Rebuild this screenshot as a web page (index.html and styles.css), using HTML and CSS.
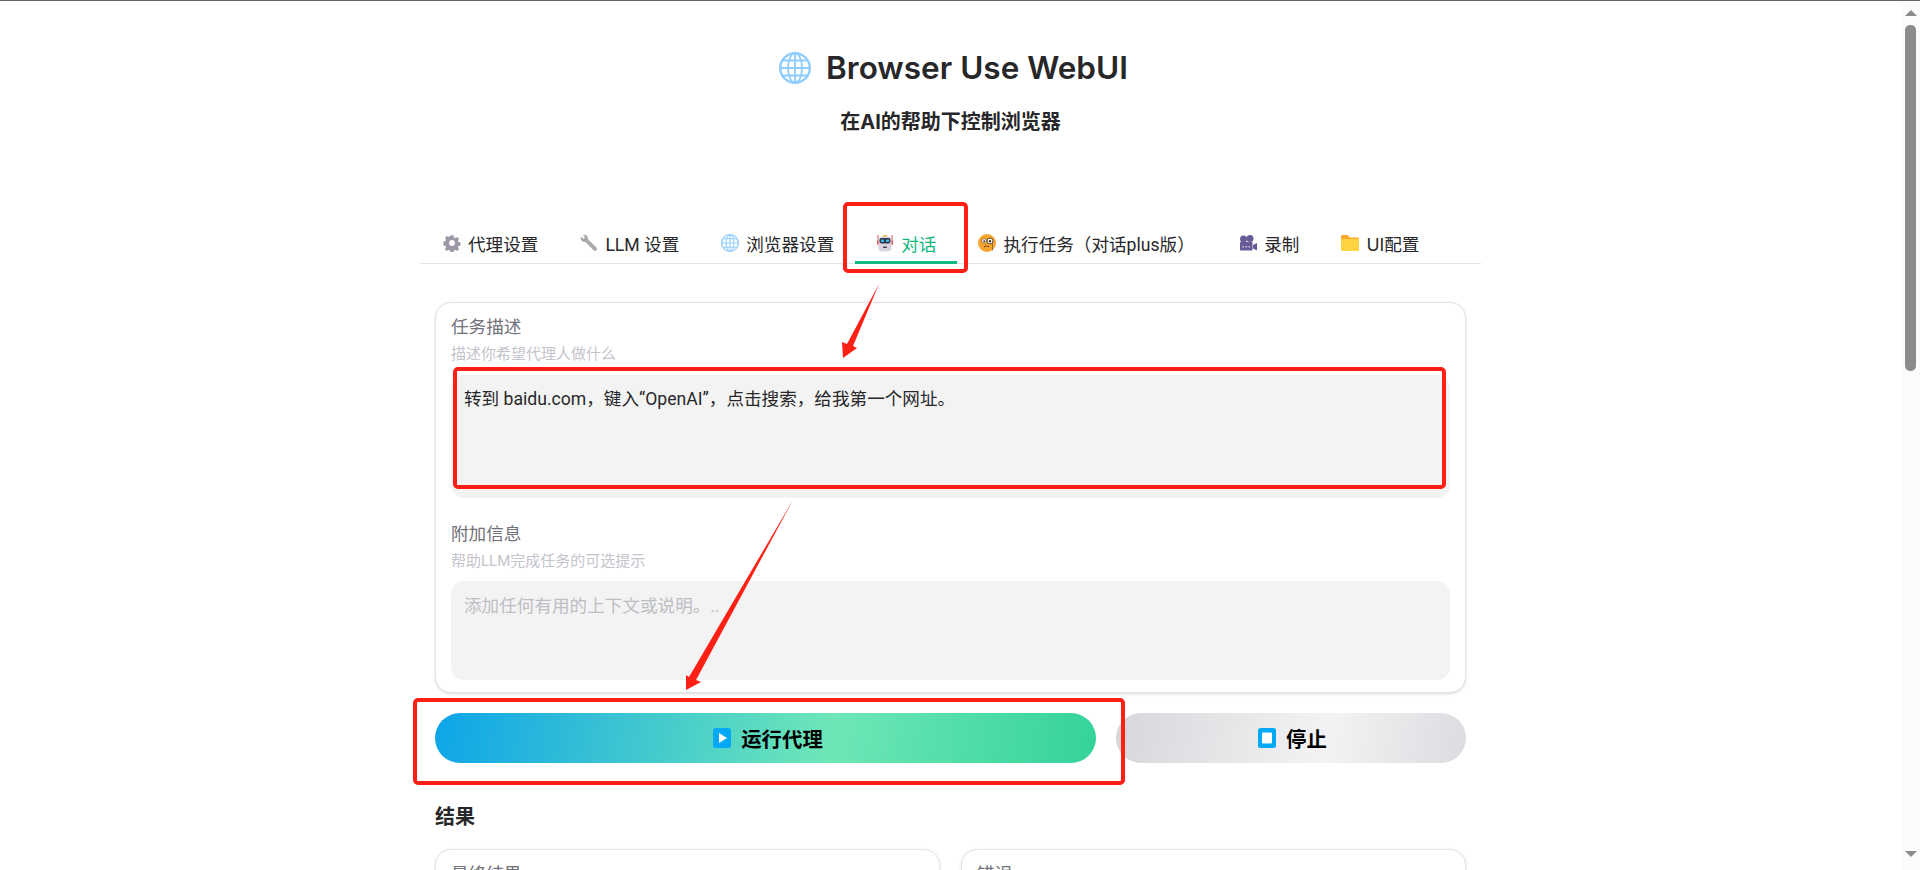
FILE: index.html
```html
<!DOCTYPE html>
<html lang="zh-CN">
<head>
<meta charset="utf-8">
<title>Browser Use WebUI</title>
<link rel="stylesheet" href="styles.css">
</head>
<body>
<svg class="defs" width="0" height="0" aria-hidden="true">
  <symbol id="globe" viewBox="0 0 32 32">
    <g fill="none" stroke="#90cdff" stroke-width="1.8">
      <circle cx="16" cy="16" r="14.800" stroke-width="2.400"/>
      <ellipse cx="16" cy="16" rx="7" ry="14.800"/>
      <path d="M16 1.400V30.600M1.400 16H30.600M4 8.500H28M4 23.500H28"/>
    </g>
  </symbol>
</svg>
<div class="app">
  <main class="page">
    <div class="container">
      <header class="head">
        <h1 class="title"><svg class="title-icon"><use href="#globe"/></svg><span>Browser Use WebUI</span></h1>
        <h3 class="subtitle">在AI的帮助下控制浏览器</h3>
      </header>
      <nav class="tabs">
        <div class="tab">
          <svg class="ico" viewBox="0 0 18 18"><path fill="#9d97a8" fill-rule="evenodd" d="M7.400 0.500h3.200l.5 2.300 1.500.7 2-1.200 2.200 2.200-1.200 2 .6 1.500 2.300.5v3.200l-2.300.5-.6 1.500 1.200 2-2.200 2.200-2-1.200-1.500.6-.5 2.300H7.400l-.5-2.300-1.500-.6-2 1.200-2.200-2.200 1.200-2-.6-1.500-2.300-.5V7.300l2.300-.5.6-1.500-1.200-2 2.200-2.200 2 1.200 1.500-.7zM9 5.800a3.200 3.200 0 1 0 0 6.400 3.200 3.200 0 0 0 0-6.400z" transform="translate(.9 .9) scale(.9)"/></svg>
          <span>代理设置</span>
        </div>
        <div class="tab">
          <svg class="ico" viewBox="0 0 18 18"><path fill="#a9a9ae" d="M1.200 2.500 3.300 4.700 5 3.200 3 1C5 .2 7 1 7.700 2.800c.3.800.3 1.500.1 2.200l8.400 8.300c1 .9 1 2.200.2 3-.8.800-2.100.8-3-.2L5.100 7.700c-.8.300-1.700.2-2.500-.1C.9 6.800.3 4.500 1.200 2.500z"/></svg>
          <span>LLM 设置</span>
        </div>
        <div class="tab">
          <svg class="ico"><use href="#globe"/></svg>
          <span>浏览器设置</span>
        </div>
        <div class="tab active">
          <svg class="ico" viewBox="0 0 18 18">
            <path fill="#e2575a" d="M1.500 1h1v5h-1zM15.500 1h1v5h-1z"/>
            <rect x="6.500" y="1" width="5" height="2" rx="1" fill="#f5c04a"/>
            <rect x="1" y="6" width="2" height="5" rx="1" fill="#e2575a"/>
            <rect x="15" y="6" width="2" height="5" rx="1" fill="#e2575a"/>
            <rect x="2.500" y="2.500" width="13" height="15" rx="4" fill="#d8d3de"/>
            <rect x="3.500" y="4" width="11" height="5.500" rx="2" fill="#2f3b4d"/>
            <rect x="5" y="5.500" width="3" height="2.500" rx="1" fill="#3dc2f0"/>
            <rect x="10" y="5.500" width="3" height="2.500" rx="1" fill="#3dc2f0"/>
            <rect x="7" y="12.500" width="4" height="1.500" fill="#4a4a55"/>
          </svg>
          <span>对话</span>
        </div>
        <div class="tab tab-wide">
          <svg class="ico" viewBox="0 0 18 18">
            <circle cx="9" cy="9" r="9" fill="#f8a52e"/>
            <circle cx="6" cy="7" r="2.400" fill="#fff" stroke="#8a5a20" stroke-width=".8"/>
            <circle cx="12" cy="7" r="3" fill="#fff" stroke="#5d4a3a" stroke-width="1"/>
            <circle cx="6.200" cy="7.200" r="1" fill="#4a3420"/>
            <circle cx="12" cy="7.200" r="1.200" fill="#4a3420"/>
            <path d="M6 13c1.500-1.200 3.500-1.200 5 0" fill="none" stroke="#7a4a1a" stroke-width="1.200"/>
            <path d="M14.500 9.500v7" stroke="#7a5a3a" stroke-width=".8"/>
          </svg>
          <span>执行任务（对话plus版）</span>
        </div>
        <div class="tab">
          <svg class="ico" viewBox="0 0 18 18">
            <g fill="#675a96">
              <circle cx="4.500" cy="5" r="3.500"/>
              <circle cx="11" cy="4.500" r="3.500"/>
              <rect x="1" y="8" width="12.500" height="8.500" rx="1"/>
              <path d="M14 11l4-2v7.500l-4-2z"/>
            </g>
            <path d="M3.500 12h1.500v1.500H3.500zM6.500 12H8v1.500H6.500zM9.500 12H11v1.500H9.500z" fill="#c9c3de"/>
          </svg>
          <span>录制</span>
        </div>
        <div class="tab tab-ui">
          <svg class="ico" viewBox="0 0 18 18">
            <path fill="#ffa729" d="M0 2.500C0 1.700.7 1 1.500 1h5L9 3.500h8c.5 0 1 .5 1 1V7H0z"/>
            <rect x="0" y="5" width="18" height="12" rx="1" fill="#ffd33f"/>
          </svg>
          <span>UI配置</span>
        </div>
      </nav>
      <section class="card form-card">
        <div class="field">
          <label class="label" for="task">任务描述</label>
          <p class="hint">描述你希望代理人做什么</p>
          <textarea class="input input-tall" id="task" readonly>转到 baidu.com，键入“OpenAI”，点击搜索，给我第一个网址。</textarea>
        </div>
        <div class="field">
          <label class="label" for="extra">附加信息</label>
          <p class="hint">帮助LLM完成任务的可选提示</p>
          <textarea class="input input-short" id="extra" readonly placeholder="添加任何有用的上下文或说明。.."></textarea>
        </div>
      </section>
      <div class="actions">
        <button class="btn btn-run">
          <svg class="btn-ico" viewBox="0 0 18 20"><rect width="18" height="20" rx="2.500" fill="#03a9f4"/><path d="M6 5l8 5-8 5z" fill="#fff"/></svg>
          运行代理
        </button>
        <button class="btn btn-stop">
          <svg class="btn-ico" viewBox="0 0 18 20"><rect width="18" height="20" rx="2.500" fill="#03a9f4"/><rect x="4" y="4.500" width="10" height="11" rx="1" fill="#fff"/></svg>
          停止
        </button>
      </div>
      <h2 class="section-title">结果</h2>
      <div class="results">
        <section class="card result-card"><div class="label">最终结果</div></section>
        <section class="card result-card"><div class="label">错误</div></section>
      </div>
    </div>
  </main>
  <aside class="scrollbar">
    <span class="arrow arrow-up"></span>
    <span class="thumb"></span>
    <span class="arrow arrow-down"></span>
  </aside>
  <svg class="marks" viewBox="0 0 1920 870" aria-hidden="true">
    <g fill="none" stroke="#fe2015" stroke-width="4">
      <rect x="845" y="204" width="121" height="67" rx="3"/>
      <rect x="455" y="369" width="989" height="118" rx="3"/>
      <rect x="415" y="700" width="708" height="83" rx="3"/>
    </g>
    <g fill="#fe2015">
      <polygon points="879,284 853,346 857,348 843,358 842,342 847,344"/>
      <polygon points="793,500 696,680 701,682 686,690 686,675 689,677"/>
    </g>
  </svg>
</div>
</body>
</html>
```

FILE: styles.css
```css
* { box-sizing: border-box; }

html, body {
  margin: 0;
  height: 100%;
  overflow: hidden;
}

body {
  background: #fff;
  color: #27272a;
  font-family: Roboto, "Noto Sans CJK SC", sans-serif;
}

.defs { position: absolute; }

.app {
  position: relative;
  display: flex;
  height: 870px;
  border-top: 1px solid #666;
  overflow: hidden;
}

.page {
  flex: 1;
  min-width: 0;
  overflow: hidden;
}

.container {
  width: 1061px;
  margin: 0 auto;
}

.head { padding-top: 47px; text-align: center; }

.title {
  display: flex;
  justify-content: center;
  align-items: center;
  gap: 15px;
  margin: 0;
  height: 40px;
  padding-left: 6px;
  font-family: Inter, "Noto Sans CJK SC", sans-serif;
  font-size: 31.500px;
  font-weight: 600;
  line-height: 40px;
}

.title-icon { width: 32px; height: 32px; }

.subtitle {
  margin: 20px 0 0;
  font-family: Inter, "Noto Sans CJK SC", sans-serif;
  font-size: 20px;
  font-weight: 700;
  line-height: 28px;
}

.tabs {
  display: flex;
  height: 40px;
  margin-top: 88px;
  padding-left: 2px;
  border-bottom: 1px solid #e4e4e7;
}

.tab {
  display: flex;
  align-items: center;
  gap: 7px;
  height: 40px;
  padding: 0 21px 2px;
  font-size: 17.600px;
  white-space: nowrap;
}

.tab.active {
  color: #10b981;
  border-bottom: 3px solid #10b981;
  padding-top: 1px;
  padding-bottom: 0;
}

.tab-wide { padding-right: 23.500px; }

.tab-ui span { font-family: Inter, "Noto Sans CJK SC", sans-serif; }

.ico { flex: none; width: 18px; height: 18px; }

.card {
  background: #fff;
  border: 1px solid #e4e4e7;
  border-radius: 16px;
  box-shadow: 0 1px 3px rgba(0, 0, 0, .14);
}

.form-card {
  display: flex;
  flex-direction: column;
  gap: 24px;
  margin: 38px 15px 0;
  padding: 12px 15px;
}

.label {
  display: block;
  color: #71717a;
  font-size: 17.600px;
  line-height: 24px;
}

.hint {
  margin: 5px 0 10px;
  color: #c4c4cc;
  font-size: 15px;
  line-height: 20px;
}

.input {
  display: block;
  width: 100%;
  padding: 12px 13px;
  border: 0;
  border-radius: 13px;
  outline: 0;
  resize: none;
  background: #f3f3f3;
  color: #27272a;
  font: inherit;
  font-size: 17.600px;
  line-height: 25px;
}

.input::placeholder { color: #bdbdc4; opacity: 1; }

.input-tall { height: 123px; margin-top: 11px; }
.input-short { height: 99px; padding-top: 13px; }

.actions {
  display: grid;
  grid-template-columns: 661fr 350fr;
  gap: 20px;
  margin: 20px 15px 0;
}

.btn {
  display: flex;
  justify-content: center;
  align-items: center;
  gap: 10px;
  height: 50px;
  border: 0;
  border-radius: 25px;
  color: #000;
  font: inherit;
  font-size: 20.400px;
  font-weight: 700;
}

.btn-run {
  padding-left: 11px;
  background: linear-gradient(100deg, #0ea5e9 0%, #6ee7b7 60%, #34d399 100%);
}

.btn-stop {
  padding-left: 9px;
  background: linear-gradient(100deg, #d7d7db 0%, #f3f3f5 60%, #dcdce0 100%);
}

.btn-ico { flex: none; width: 18px; height: 20px; }

.section-title {
  margin: 40px 15px 18px;
  font-size: 20px;
  font-weight: 700;
  line-height: 28px;
}

.results {
  display: grid;
  grid-template-columns: 1fr 1fr;
  gap: 21px;
  margin: 0 15px;
}

.result-card {
  height: 200px;
  padding: 12px 15px;
}

.scrollbar {
  display: flex;
  flex: none;
  flex-direction: column;
  align-items: center;
  width: 19px;
  padding-top: 9px;
  background: #fbfbfb;
}

.arrow {
  width: 0;
  height: 0;
  border-left: 6px solid transparent;
  border-right: 6px solid transparent;
}

.arrow-up { border-bottom: 6px solid #8b8b8b; }
.arrow-down { margin-top: 480px; border-top: 6px solid #8b8b8b; }

.thumb {
  width: 11px;
  height: 346px;
  margin-top: 9px;
  border-radius: 5px;
  background: #8b8b8b;
}

.marks {
  position: absolute;
  top: -1px;
  left: 0;
  width: 1920px;
  height: 870px;
  pointer-events: none;
}
```
